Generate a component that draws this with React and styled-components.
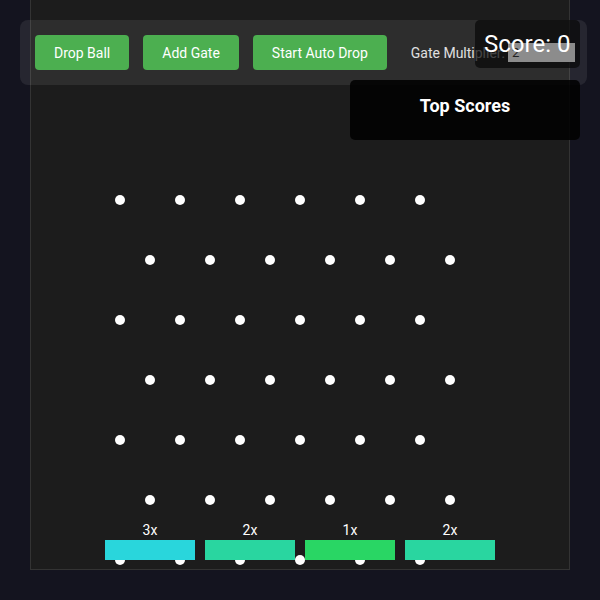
import styled, { createGlobalStyle } from "styled-components";

const BOARD_LEFT = 31; // page x of board content edge
const PEG_SIZE = 10;

const GlobalStyle = createGlobalStyle`
  html, body {
    margin: 0;
    padding: 0;
    background: #14141f;
    font-family: Roboto, "Liberation Sans", sans-serif;
  }
`;

const Page = styled.div`
  position: relative;
  width: 600px;
  height: 600px;
  overflow: hidden;
  background: #14141f;
`;

const Board = styled.div`
  position: relative;
  box-sizing: border-box;
  width: 540px;
  height: 570px;
  margin: 0 auto;
  background: #1c1c1c;
  border: 1px solid #333;
  border-top: none;
`;

const Peg = styled.div`
  position: absolute;
  width: ${PEG_SIZE}px;
  height: ${PEG_SIZE}px;
  border-radius: 50%;
  background: #fff;
`;

const Bins = styled.div`
  position: absolute;
  left: ${105 - BOARD_LEFT}px;
  top: 521px;
  display: flex;
  gap: 10px;
`;

const Bin = styled.div`
  display: flex;
  flex-direction: column;
  align-items: center;
  width: 90px;
  gap: 1px;
`;

const BinLabel = styled.span`
  color: #fff;
  font-size: 14px;
  line-height: 18px;
`;

const BinBar = styled.div`
  width: 90px;
  height: 20px;
  background: ${(p) => p.color};
`;

const Controls = styled.div`
  position: absolute;
  top: 20px;
  left: 20px;
  box-sizing: border-box;
  width: 567px;
  height: 65px;
  padding: 15px;
  display: flex;
  align-items: center;
  background: rgba(255, 255, 255, 0.08);
  border-radius: 8px;
`;

const Button = styled.button`
  flex-shrink: 0;
  height: 35px;
  padding: 0 19px;
  margin-right: 14px;
  border: none;
  border-radius: 4px;
  background: #4caf50;
  color: #fff;
  font-family: Roboto, "Liberation Sans", sans-serif;
  font-size: 14px;
  white-space: nowrap;
  cursor: pointer;
`;

const Label = styled.label`
  flex-shrink: 0;
  margin-left: 10px;
  color: #e0e0e0;
  font-size: 14px;
  white-space: nowrap;
  display: flex;
  align-items: center;
  gap: 3px;
`;

const Input = styled.input`
  position: relative;
  z-index: 1;
  box-sizing: border-box;
  width: 67px;
  height: 19px;
  padding: 0 4px;
  border: none;
  background: #8c8c8c;
  color: #222;
  font-family: Roboto, "Liberation Sans", sans-serif;
  font-size: 13px;
  outline: none;
`;

const ScoreBox = styled.div`
  position: absolute;
  top: 20px;
  left: 475px;
  width: 105px;
  box-sizing: border-box;
  padding: 10px 10px 10px 9px;
  background: rgba(8, 8, 8, 0.72);
  border-radius: 5px;
`;

const ScoreText = styled.span`
  position: relative;
  z-index: 2;
  color: #fff;
  font-size: 24px;
  line-height: 28px;
  white-space: nowrap;
`;

const TopScores = styled.div`
  position: absolute;
  top: 80px;
  left: 350px;
  width: 230px;
  height: 60px;
  box-sizing: border-box;
  padding-top: 15px;
  text-align: center;
  background: rgba(0, 0, 0, 0.85);
  border-radius: 5px;
  color: #fff;
  font-size: 18px;
  line-height: 22px;
  font-weight: bold;
`;

const pegs = [];
for (let row = 0; row < 7; row++) {
  const y = 200 + row * 60;
  const startX = row % 2 === 0 ? 120 : 150;
  for (let i = 0; i < 6; i++) {
    pegs.push({ x: startX + i * 60, y });
  }
}

const bins = [
  { label: "3x", color: "#29d6dc" },
  { label: "2x", color: "#29d6a0" },
  { label: "1x", color: "#29d664" },
  { label: "2x", color: "#29d6a0" },
];

function App() {
  return (
    <Page>
      <GlobalStyle />
      <Board>
        {pegs.map((p, i) => (
          <Peg
            key={i}
            style={{ left: p.x - BOARD_LEFT - PEG_SIZE / 2, top: p.y - PEG_SIZE / 2 }}
          />
        ))}
        <Bins>
          {bins.map((b, i) => (
            <Bin key={i}>
              <BinLabel>{b.label}</BinLabel>
              <BinBar color={b.color} />
            </Bin>
          ))}
        </Bins>
      </Board>
      <Controls>
        <Button>Drop Ball</Button>
        <Button>Add Gate</Button>
        <Button>Start Auto Drop</Button>
        <Label>
          Gate Multiplier:
          <Input type="number" defaultValue={2} />
        </Label>
      </Controls>
      <ScoreBox>
        <ScoreText>Score: 0</ScoreText>
      </ScoreBox>
      <TopScores>Top Scores</TopScores>
    </Page>
  );
}

export default App;
